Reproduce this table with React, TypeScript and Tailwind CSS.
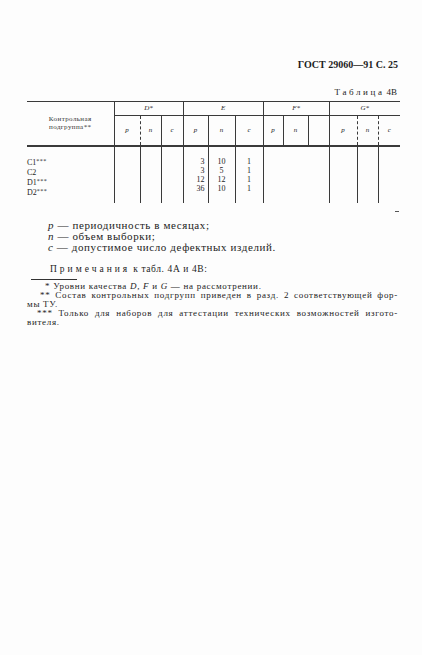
import React from "react";

const serif = "font-['Liberation_Serif','Times_New_Roman',serif]";

// column widths of Таблица 4В, px (sum = 373)
const cols = [87, 26, 21, 22, 25, 27, 28, 20, 25, 21, 28, 21, 22];

const rows = [
  { name: "C1", stars: "***", e: ["3", "10", "1"] },
  { name: "C2", stars: "", e: ["3", "5", "1"] },
  { name: "D1", stars: "***", e: ["12", "12", "1"] },
  { name: "D2", stars: "***", e: ["36", "10", "1"] },
];

const line = "border-[#3a3a3a]";

const Sub = ({ children, className = "" }: { children: React.ReactNode; className?: string }) => (
  <td className={`h-[30px] text-center align-middle italic text-[7px] ${className}`}>{children}</td>
);

const Table4B = () => (
  <table className={`table-fixed border-collapse w-[373px] text-[#1c1c1c] ${serif}`}>
    <colgroup>
      {cols.map((w, i) => (
        <col key={i} style={{ width: w }} />
      ))}
    </colgroup>
    <thead>
      <tr className={`border-t-[1.5px] ${line}`}>
        <td rowSpan={2} className={`border-r border-b-2 ${line} text-center align-middle text-[7px] leading-[8px] tracking-[0.4px] text-[#333]`}>
          Контрольная
          <br />
          подгруппа**
        </td>
        <td colSpan={3} className={`h-[14px] border-r border-b ${line} text-center italic text-[7px] leading-none`}>D*</td>
        <td colSpan={3} className={`border-r border-b ${line} text-center italic text-[7px] leading-none`}>E</td>
        <td colSpan={3} className={`border-r border-b ${line} text-center italic text-[7px] leading-none`}>F*</td>
        <td colSpan={3} className={`border-b ${line} text-center italic text-[7px] leading-none`}>G*</td>
      </tr>
      <tr className={`border-b-2 ${line}`}>
        <Sub className={`border-r border-dashed ${line}`}>p</Sub>
        <Sub className={`border-r ${line}`}>n</Sub>
        <Sub className={`border-r ${line}`}>c</Sub>
        <Sub className={`border-r ${line}`}>p</Sub>
        <Sub className={`border-r ${line}`}>n</Sub>
        <Sub className={`border-r ${line}`}>c</Sub>
        <Sub className={`border-r ${line}`}>p</Sub>
        <Sub className={`border-r ${line}`}>n</Sub>
        <Sub className={`border-r ${line}`}></Sub>
        <Sub className={`border-r border-dashed ${line}`}>p</Sub>
        <Sub className={`border-r border-dashed ${line}`}>n</Sub>
        <Sub>c</Sub>
      </tr>
    </thead>
    <tbody className="text-[8px] leading-[9px]">
      <tr>
        <td className={`h-[57px] border-r ${line} align-top pt-[10px]`}>
          {rows.map((r) => (
            <div key={r.name}>
              {r.name}
              <span className="text-[6px] align-[2px] tracking-[0.5px]">{r.stars}</span>
            </div>
          ))}
        </td>
        <td className={`border-r ${line}`} />
        <td className={`border-r ${line}`} />
        <td className={`border-r ${line}`} />
        {[0, 1, 2].map((k) => (
          <td
            key={k}
            className={`border-r ${line} align-top pt-[10px] ${k === 0 ? "text-right pr-[3px]" : "text-center"}`}
          >
            {rows.map((r) => (
              <div key={r.name}>{r.e[k]}</div>
            ))}
          </td>
        ))}
        <td />
        <td />
        <td className={`border-r ${line}`} />
        <td className={`border-r ${line}`} />
        <td className={`border-r ${line}`} />
        <td />
      </tr>
    </tbody>
  </table>
);

export default function App() {
  return (
    <div className={`min-h-[655px] w-[422px] bg-[#fdfdfd] text-[#1c1c1c] ${serif}`}>
      <div className="ml-[27px] w-[373px] pt-[59px]">
        <div className="flex justify-end pr-[2px] text-[10px] leading-[12px] font-bold">
          ГОСТ 29060—91 С. 25
        </div>
        <div className="mt-[15px] flex justify-end pr-[3px] text-[9px] leading-[12px]">
          <span className="tracking-[2.6px]">Таблица</span>
          <span className="ml-[2px]">4В</span>
        </div>
        <div className="mt-[3px]">
          <Table4B />
        </div>

        <div className="relative mt-[17px] pl-[21px] text-[11px] leading-[11px] tracking-[0.6px]">
          <div>
            <i>p</i> — периодичность в месяцах;
          </div>
          <div>
            <i>n</i> — объем выборки;
          </div>
          <div>
            <i>c</i> — допустимое число дефектных изделий.
          </div>
          <span className="absolute right-[1px] top-[-9px] h-px w-[4px] bg-[#555]" />
        </div>

        <div className="mt-[10px] pl-[23px] text-[9.5px] leading-[12px] tracking-[0.6px]">
          <span className="tracking-[3px]">Примечания</span> к табл. 4А и 4В:
        </div>

        <div className="mt-[4px] ml-[4px] h-px w-[46px] bg-[#333]" />

        <div className="mt-[2px] text-[9px] leading-[9px] tracking-[0.7px]">
          <p className="pl-[18px]">
            * Уровни качества <i>D</i>, <i>F</i> и <i>G</i> — на рассмотрении.
          </p>
          <p className="pl-[13px] pr-[2px] text-justify [text-align-last:justify]">
            ** Состав контрольных подгрупп приведен в разд. 2 соответствующей фор-
          </p>
          <p>мы ТУ.</p>
          <p className="pl-[10px] pr-[2px] text-justify [text-align-last:justify]">
            *** Только для наборов для аттестации технических возможностей изгото-
          </p>
          <p>вителя.</p>
        </div>
      </div>
    </div>
  );
}
